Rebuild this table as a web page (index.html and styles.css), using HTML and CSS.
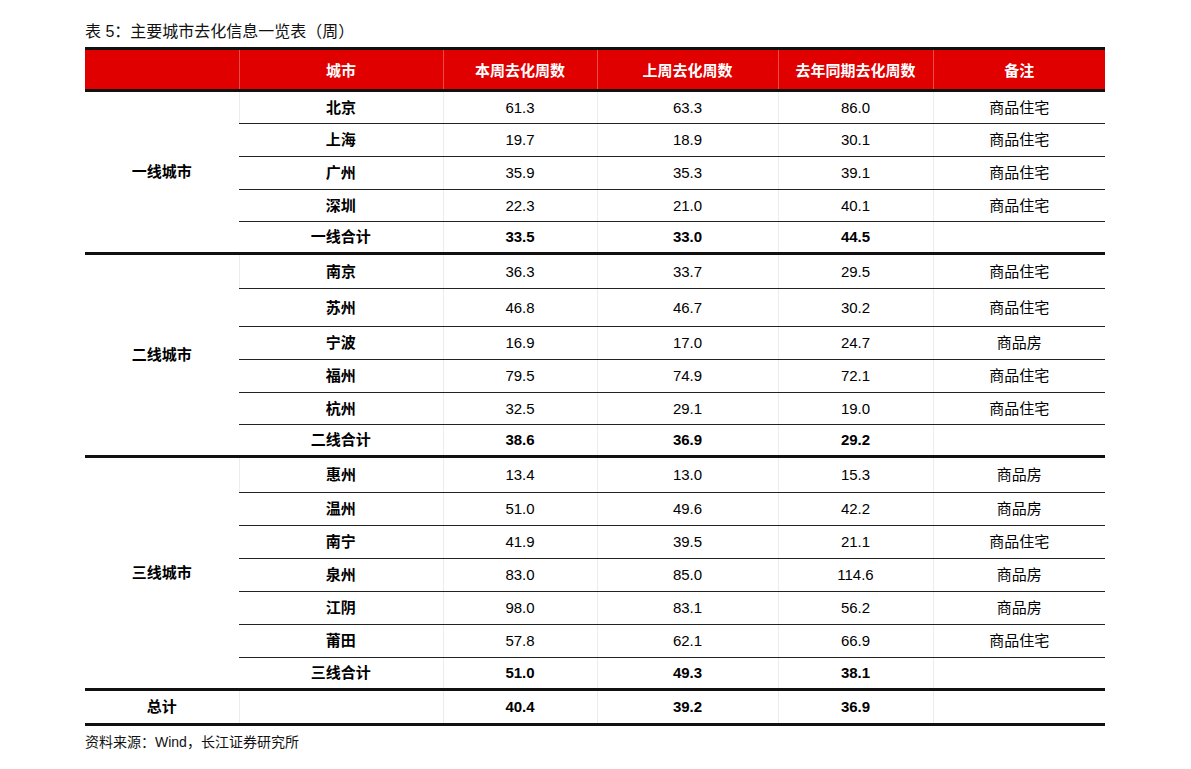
FILE: index.html
```html
<!DOCTYPE html>
<html lang="zh">
<head>
<meta charset="utf-8">
<link rel="stylesheet" href="styles.css">
</head>
<body>
<div class="page">
  <div class="title">表 5：主要城市去化信息一览表（周）</div>
  <table class="tbl">
    <colgroup>
      <col class="c1"><col class="c2"><col class="c3"><col class="c4"><col class="c5"><col class="c6">
    </colgroup>
    <thead>
      <tr><th></th><th>城市</th><th>本周去化周数</th><th>上周去化周数</th><th>去年同期去化周数</th><th>备注</th></tr>
    </thead>
    <tbody>
      <tr class="h32"><td class="grp end" rowspan="5">一线城市</td><td class="city">北京</td><td>61.3</td><td>63.3</td><td>86.0</td><td>商品住宅</td></tr>
      <tr class="h33"><td class="city">上海</td><td>19.7</td><td>18.9</td><td>30.1</td><td>商品住宅</td></tr>
      <tr class="h33"><td class="city">广州</td><td>35.9</td><td>35.3</td><td>39.1</td><td>商品住宅</td></tr>
      <tr class="h32"><td class="city">深圳</td><td>22.3</td><td>21.0</td><td>40.1</td><td>商品住宅</td></tr>
      <tr class="h33 sum"><td class="city">一线合计</td><td>33.5</td><td>33.0</td><td>44.5</td><td></td></tr>

      <tr class="h34"><td class="grp end" rowspan="6">二线城市</td><td class="city">南京</td><td>36.3</td><td>33.7</td><td>29.5</td><td>商品住宅</td></tr>
      <tr class="h38"><td class="city">苏州</td><td>46.8</td><td>46.7</td><td>30.2</td><td>商品住宅</td></tr>
      <tr class="h33"><td class="city">宁波</td><td>16.9</td><td>17.0</td><td>24.7</td><td>商品房</td></tr>
      <tr class="h33"><td class="city">福州</td><td>79.5</td><td>74.9</td><td>72.1</td><td>商品住宅</td></tr>
      <tr class="h32"><td class="city">杭州</td><td>32.5</td><td>29.1</td><td>19.0</td><td>商品住宅</td></tr>
      <tr class="h33 sum"><td class="city">二线合计</td><td>38.6</td><td>36.9</td><td>29.2</td><td></td></tr>

      <tr class="h35"><td class="grp end" rowspan="7">三线城市</td><td class="city">惠州</td><td>13.4</td><td>13.0</td><td>15.3</td><td>商品房</td></tr>
      <tr class="h33"><td class="city">温州</td><td>51.0</td><td>49.6</td><td>42.2</td><td>商品房</td></tr>
      <tr class="h33"><td class="city">南宁</td><td>41.9</td><td>39.5</td><td>21.1</td><td>商品住宅</td></tr>
      <tr class="h33"><td class="city">泉州</td><td>83.0</td><td>85.0</td><td>114.6</td><td>商品房</td></tr>
      <tr class="h33"><td class="city">江阴</td><td>98.0</td><td>83.1</td><td>56.2</td><td>商品房</td></tr>
      <tr class="h33"><td class="city">莆田</td><td>57.8</td><td>62.1</td><td>66.9</td><td>商品住宅</td></tr>
      <tr class="h33 sum"><td class="city">三线合计</td><td>51.0</td><td>49.3</td><td>38.1</td><td></td></tr>

      <tr class="h35 sum total"><td class="grp end">总计</td><td class="city"></td><td>40.4</td><td>39.2</td><td>36.9</td><td></td></tr>
    </tbody>
  </table>
  <div class="source">资料来源：Wind，长江证券研究所</div>
</div>
</body>
</html>
```

FILE: styles.css
```css
html, body {
  margin: 0;
  padding: 0;
  background: #ffffff;
}

body {
  font-family: "Liberation Sans", "Noto Sans CJK SC", sans-serif;
  color: #000000;
}

.page {
  padding: 22px 0 0 85px;
  width: 1020px;
}

.title {
  font-size: 16px;
  line-height: 20px;
  height: 25px;
  color: #111;
}

.tbl {
  width: 1020px;
  border-collapse: collapse;
  table-layout: fixed;
  font-size: 15px;
}

.c1 { width: 154px; }
.c2 { width: 204px; }
.c3 { width: 154px; }
.c4 { width: 181px; }
.c5 { width: 155px; }
.c6 { width: 172px; }

.tbl th {
  background: #e00000;
  color: #ffffff;
  font-weight: 700;
  height: 39px;
  padding: 0;
  border-top: 3px solid #111;
  border-bottom: 3px solid #111;
  border-left: 1px solid #ee4a4a;
  text-align: center;
  vertical-align: middle;
}

.tbl th:first-child {
  border-left: none;
}

.tbl td {
  padding: 0;
  text-align: center;
  vertical-align: middle;
  border-bottom: 1px solid #222;
  border-left: 1px solid #ececec;
  line-height: 18px;
}

.tbl td:first-child {
  border-left: none;
}

.tbl td.grp {
  font-weight: 700;
  border-bottom: 3px solid #111;
}

.tbl td.city {
  font-weight: 700;
}

.tbl tr.sum td {
  font-weight: 700;
  border-bottom: 3px solid #111;
}

.h32 td { height: 31px; }
.h33 td { height: 32px; }
.h34 td { height: 33px; }
.h35 td { height: 34px; }
.h38 td { height: 37px; }

.tbl tr.sum td { height: 30px; }
.tbl tr.h35.sum td { height: 32px; }

.tbl td.grp[rowspan] { height: auto; }

.source {
  font-size: 14px;
  line-height: 18px;
  margin-top: 7px;
  color: #111;
}
```
